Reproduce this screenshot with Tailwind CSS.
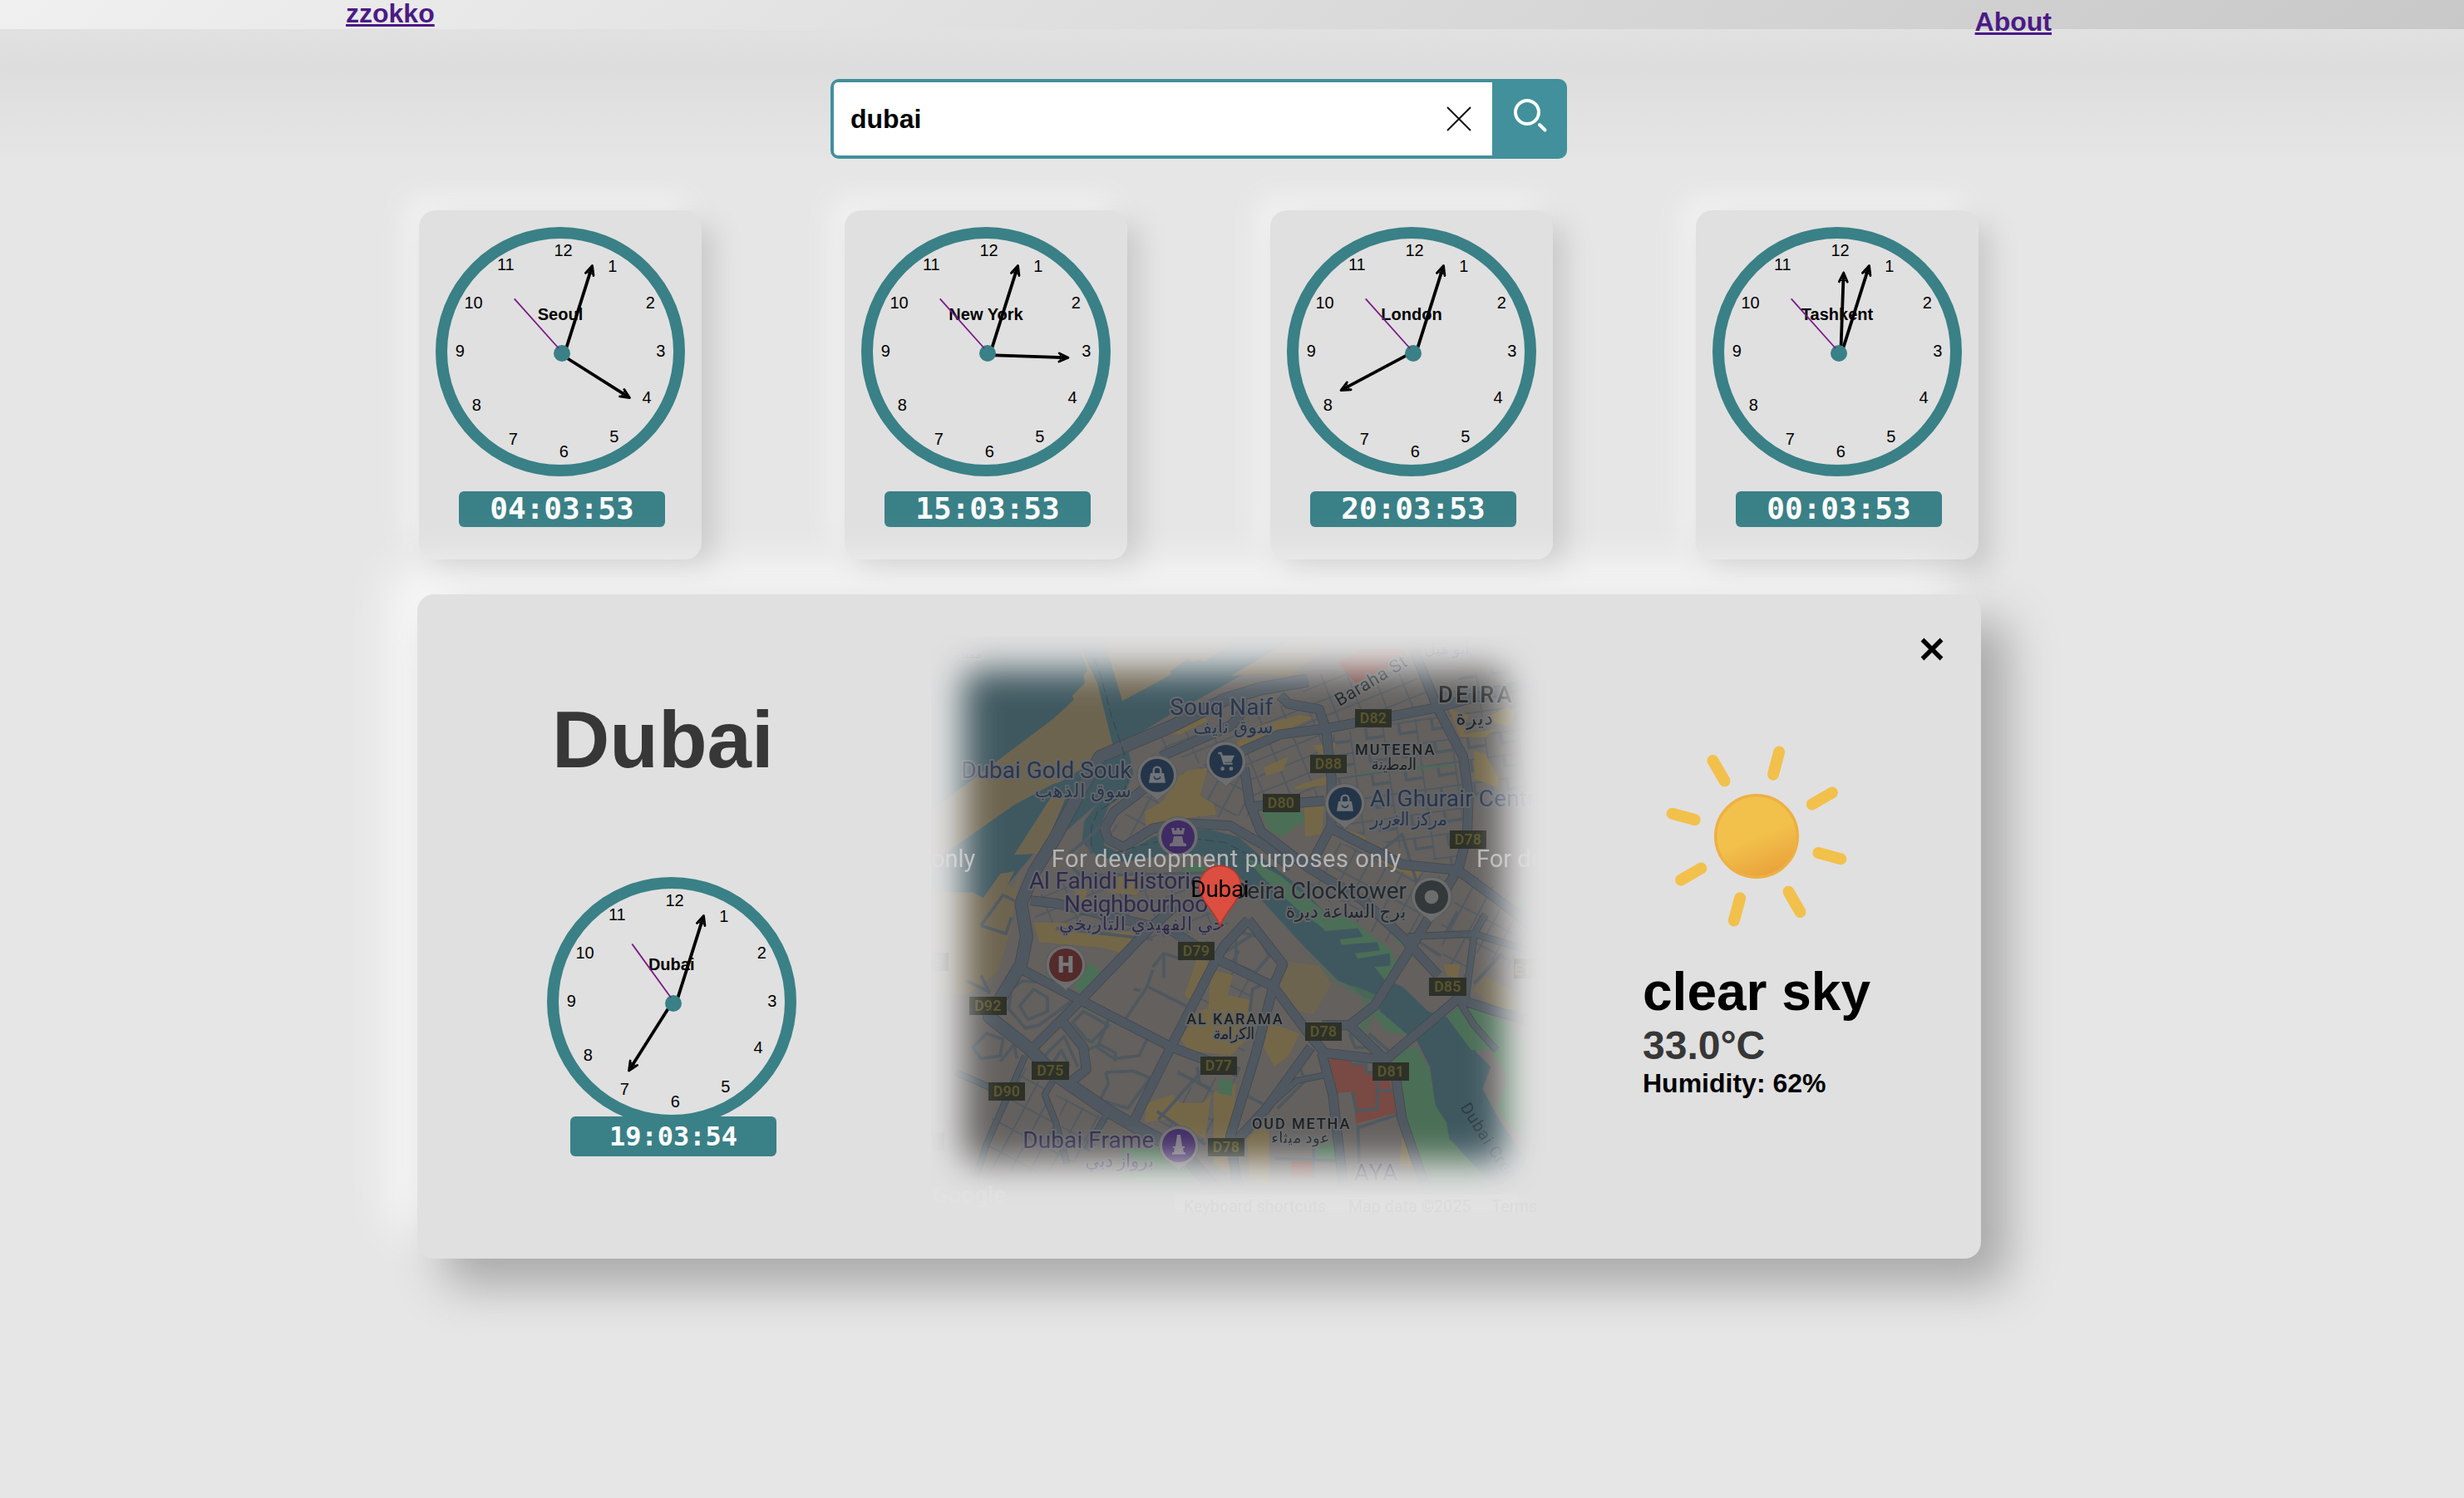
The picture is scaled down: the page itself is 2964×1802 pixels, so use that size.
<!DOCTYPE html>
<html lang="en">
<head>
<meta charset="utf-8">
<title>World clock</title>
<script src="https://cdn.jsdelivr.net/npm/@tailwindcss/browser@4"></script>
</head>
<body class="h-[1802px] w-[2964px] overflow-hidden bg-[#e6e6e6] font-['Liberation_Sans',Arial,sans-serif] text-black">

<!-- shared clock face and hand shapes -->
<svg class="hidden">
  <symbol id="face" viewBox="0 0 300 300">
    <circle cx="150" cy="150" r="143" fill="none" stroke="#3a8087" stroke-width="14"/>
    <g font-size="20" text-anchor="middle" fill="#000">
      <text x="153.6" y="35.3">12</text><text x="212.7" y="53.5">1</text><text x="258.3" y="97.5">2</text>
      <text x="270.7" y="155.7">3</text><text x="254" y="212">4</text><text x="214.7" y="258.5">5</text>
      <text x="154.3" y="276.5">6</text><text x="93.3" y="262.3">7</text><text x="49.3" y="220.7">8</text>
      <text x="29.3" y="155.7">9</text><text x="45.6" y="97.5">10</text><text x="84.3" y="51.7">11</text>
    </g>
  </symbol>
  <symbol id="minute" viewBox="0 0 300 300">
    <g transform="translate(188.5 46.5) rotate(17.5)" fill="none" stroke="#000" stroke-linejoin="round" stroke-linecap="round">
      <path d="M0 3V111" stroke-width="3.8"/><path d="M-5 11L0 0L5 11" stroke-width="2.8"/><path d="M-4 9.5H4" stroke-width="1.4"/>
    </g>
  </symbol>
  <symbol id="hour" viewBox="-10 -2 20 110">
    <g fill="none" stroke="#000" stroke-linejoin="round" stroke-linecap="round">
      <path d="M0 3V95" stroke-width="3.8"/><path d="M-5 11L0 0L5 11" stroke-width="2.8"/><path d="M-4 9.5H4" stroke-width="1.4"/>
    </g>
  </symbol>
</svg>

<div class="bg-linear-to-b from-[#e1e1e1] from-[35px] via-[#dddddd] via-[80px] to-[#e6e6e6] to-[205px]">
  <header class="flex h-[35px] items-start justify-between bg-linear-135 from-[#f0f0f0] to-[#c8c8c8] pr-[496px] pl-[416px] text-[32px] leading-[33px] font-bold text-[#4b1a85]">
    <a class="underline decoration-[3px] underline-offset-[2px]">zzokko</a>
    <a class="mt-[10px] underline decoration-[3px] underline-offset-[2px]">About</a>
  </header>

  <form class="mt-[60px] ml-[999px] flex h-24 w-[886px] overflow-hidden rounded-[10px] bg-[#41909b] p-1 pr-0">
    <div class="flex w-[792px] items-center justify-between rounded-l-[5px] bg-white pr-[25px] pl-5">
      <span class="text-[32px] leading-[36px] font-bold">dubai</span>
      <svg class="h-[30px] w-[30px]" viewBox="0 0 30 30"><path d="M1 1L29 29M29 1L1 29" stroke="#111" stroke-width="2"/></svg>
    </div>
    <svg class="mt-[18px] ml-[24px] h-[44px] w-[44px]" viewBox="0 0 44 44" fill="none" stroke="#fff" stroke-width="4"><circle cx="18" cy="18" r="14"/><path d="M33 33L39.5 39.5" stroke-linecap="round"/></svg>
  </form>
</div>

<main>
  <section class="mt-[62px] ml-[504px] flex gap-[172px]">
    <article class="h-[420px] w-[340px] rounded-[20px] bg-[#e0e0e0] px-5 pt-5 shadow-[16px_16px_32px_#cacaca,-16px_-16px_32px_#f2f2f2]">
      <svg class="block h-[300px] w-[300px]" viewBox="0 0 300 300">
        <use href="#face"/>
        <text x="150" y="111.7" font-size="20" font-weight="700" text-anchor="middle">Seoul</text>
        <use href="#minute"/>
        <g transform="translate(233.5 205.5) rotate(122.3)"><use href="#hour" x="-10" y="-2" width="20" height="110"/></g>
        <circle cx="152" cy="152" r="10" fill="#3a8087"/>
        <path d="M148 146L94.7 86.3" stroke="#7b1a85" stroke-width="1.8"/>
      </svg>
      <div class="mt-[18px] ml-7 h-[43px] w-[248px] rounded-md bg-[#3a8087] text-center font-['DejaVu_Sans_Mono',monospace] text-[36px] leading-[42px] font-bold text-white">04:03:53</div>
    </article>
    <article class="h-[420px] w-[340px] rounded-[20px] bg-[#e0e0e0] px-5 pt-5 shadow-[16px_16px_32px_#cacaca,-16px_-16px_32px_#f2f2f2]">
      <svg class="block h-[300px] w-[300px]" viewBox="0 0 300 300">
        <use href="#face"/>
        <text x="150" y="111.7" font-size="20" font-weight="700" text-anchor="middle">New York</text>
        <use href="#minute"/>
        <g transform="translate(249 157.3) rotate(91.9)"><use href="#hour" x="-10" y="-2" width="20" height="110"/></g>
        <circle cx="152" cy="152" r="10" fill="#3a8087"/>
        <path d="M148 146L94.7 86.3" stroke="#7b1a85" stroke-width="1.8"/>
      </svg>
      <div class="mt-[18px] ml-7 h-[43px] w-[248px] rounded-md bg-[#3a8087] text-center font-['DejaVu_Sans_Mono',monospace] text-[36px] leading-[42px] font-bold text-white">15:03:53</div>
    </article>
    <article class="h-[420px] w-[340px] rounded-[20px] bg-[#e0e0e0] px-5 pt-5 shadow-[16px_16px_32px_#cacaca,-16px_-16px_32px_#f2f2f2]">
      <svg class="block h-[300px] w-[300px]" viewBox="0 0 300 300">
        <use href="#face"/>
        <text x="150" y="111.7" font-size="20" font-weight="700" text-anchor="middle">London</text>
        <use href="#minute"/>
        <g transform="translate(65 196.5) rotate(242)"><use href="#hour" x="-10" y="-2" width="20" height="110"/></g>
        <circle cx="152" cy="152" r="10" fill="#3a8087"/>
        <path d="M148 146L94.7 86.3" stroke="#7b1a85" stroke-width="1.8"/>
      </svg>
      <div class="mt-[18px] ml-7 h-[43px] w-[248px] rounded-md bg-[#3a8087] text-center font-['DejaVu_Sans_Mono',monospace] text-[36px] leading-[42px] font-bold text-white">20:03:53</div>
    </article>
    <article class="h-[420px] w-[340px] rounded-[20px] bg-[#e0e0e0] px-5 pt-5 shadow-[16px_16px_32px_#cacaca,-16px_-16px_32px_#f2f2f2]">
      <svg class="block h-[300px] w-[300px]" viewBox="0 0 300 300">
        <use href="#face"/>
        <text x="150" y="111.7" font-size="20" font-weight="700" text-anchor="middle">Tashkent</text>
        <use href="#minute"/>
        <g transform="translate(157.7 55) rotate(2)"><use href="#hour" x="-10" y="-2" width="20" height="110"/></g>
        <circle cx="152" cy="152" r="10" fill="#3a8087"/>
        <path d="M148 146L94.7 86.3" stroke="#7b1a85" stroke-width="1.8"/>
      </svg>
      <div class="mt-[18px] ml-7 h-[43px] w-[248px] rounded-md bg-[#3a8087] text-center font-['DejaVu_Sans_Mono',monospace] text-[36px] leading-[42px] font-bold text-white">00:03:53</div>
    </article>
  </section>

  <section class="relative mt-[42px] ml-[502px] flex h-[799px] w-[1881px] rounded-[20px] bg-[#e0e0e0] shadow-[32px_32px_56px_#a8a8a8,-32px_-32px_56px_rgba(255,255,255,0.75)]">
    <div class="w-[618px] pt-[127px] pl-[156px]">
      <h1 class="ml-[6px] text-[96px] leading-[96px] font-bold text-[#373737]">Dubai</h1>
      <svg class="mt-[117px] block h-[300px] w-[300px]" viewBox="0 0 300 300">
        <use href="#face"/>
        <text x="149.7" y="111.7" font-size="20" font-weight="700" text-anchor="middle">Dubai</text>
        <use href="#minute"/>
        <g transform="translate(98.5 233) rotate(212.3)"><use href="#hour" x="-10" y="-2" width="20" height="110"/></g>
        <circle cx="152" cy="152" r="10" fill="#3a8087"/>
        <path d="M149 145L102.3 80.5" stroke="#7b1a85" stroke-width="1.8"/>
      </svg>
      <div class="relative -mt-3 ml-7 h-12 w-[248px] rounded-md bg-[#3a8087] text-center font-['DejaVu_Sans_Mono',monospace] text-[32px] leading-[48px] font-bold text-white">19:03:54</div>
    </div>

    <!-- city map, fading out to the panel at its edges -->
    <svg class="mt-[50px] block h-[700px] w-[750px] shrink-0" viewBox="0 45 2250 2100" font-family="Roboto, 'DejaVu Sans', sans-serif">
      <defs>
        <filter id="soft" x="-20%" y="-20%" width="140%" height="140%"><feGaussianBlur stdDeviation="62"/></filter>
        <mask id="fade" maskUnits="userSpaceOnUse" x="0" y="45" width="2250" height="2100">
          <rect x="118" y="168" width="1952" height="1775" rx="50" fill="#fff" filter="url(#soft)"/>
        </mask>
        <pattern id="gridA" width="62" height="92" patternUnits="userSpaceOnUse" patternTransform="rotate(28)"><path d="M0 0H62M0 0V92" stroke="#4f585f" stroke-width="11" fill="none"/></pattern>
        <pattern id="gridB" width="88" height="56" patternUnits="userSpaceOnUse" patternTransform="rotate(-22)"><path d="M0 0H88M0 0V56" stroke="#4f585f" stroke-width="10" fill="none"/></pattern>
        <pattern id="gridC" width="120" height="84" patternUnits="userSpaceOnUse" patternTransform="rotate(-8)"><path d="M0 0H120M0 0V84M60 0V42H120" stroke="#4f585f" stroke-width="10" fill="none"/></pattern>
        <g id="pin"><path d="M0 92C-14 70-72 52-72 0A72 72 0 1 1 72 0C72 52 14 70 0 92Z" fill="#6d6d6d" stroke="#55585b" stroke-width="3"/></g>
        <g id="bag"><path d="M-24-8H24L30 27H-30Z" fill="#6f7478"/><path d="M-13-8V-17A13 13 0 0 1 13-17V-8" fill="none" stroke="#6f7478" stroke-width="7"/><path d="M-11 5A11 9 0 0 0 11 5" fill="none" stroke="#243549" stroke-width="5"/></g>
      </defs>
      <g mask="url(#fade)">
        <rect x="0" y="45" width="2250" height="2100" fill="#63605e"/>
        <!-- sea and creek -->
        <path fill="#3f5860" d="M0 45H1370L1080 210L860 330L705 425L730 540L700 610L640 660L612 730L625 800L690 835L800 770L900 742L1010 745L1110 770L1200 850L1330 950L1420 1040L1500 1075L1555 1100L1660 1195L1655 1240L1600 1240L1640 1285L1700 1310L1795 1400L1860 1420L1915 1460L1970 1550L2020 1600L1990 1680L2050 1790L2180 1980L2250 2145H2100L1900 1890L1870 1860L1850 1790L1820 1740L1800 1600L1755 1510L1720 1485L1620 1400L1610 1360L1560 1350L1520 1310L1470 1290L1350 1170L1240 1050L1130 930L1000 840L880 830L700 860L600 840L545 790L552 715L600 650L440 790L370 830L270 950L190 990L150 970L0 970Z"/>
        <!-- sand -->
        <g fill="#6d6450">
          <path d="M520 45L565 170L550 185L555 215L510 260L515 275L440 345L0 675V865L300 655L440 580L470 570L600 490L655 435L600 215L545 100Z"/>
          <path d="M620 45L690 280L865 185V170L930 125L940 138L970 130L985 138L1080 75L1100 45Z"/>
          <path d="M1080 190L1300 60L1420 45L1400 110L1290 190L1180 180Z"/>
          <path d="M450 600L490 620L400 830L300 835Z"/>
          <path d="M0 970L150 972L187 992L250 903L300 895L275 945L298 955L330 890L300 1010L290 1100L240 1260L130 1340L0 1330Z"/>
          <path d="M1285 1220L1400 1235L1445 1300L1380 1410L1270 1390L1250 1330Z"/>
          <path d="M1955 1320L2000 1270L2100 1330L2130 1390L2040 1395Z"/>
        </g>
        <!-- street grids -->
        <path fill="url(#gridB)" d="M760 420L1080 330L1400 270L1410 420L1440 620L1140 700L1120 560L900 480Z"/>
        <path fill="url(#gridA)" d="M700 690L850 560L1080 480L1130 560L1145 690L1020 700L800 710L700 780L650 750Z"/>
        <path fill="url(#gridB)" d="M1300 210L1700 100L1820 310L1440 380L1400 300Z"/>
        <path fill="url(#gridC)" d="M1450 400L1830 330L1930 560V720L1890 880L1440 720Z"/>
        <path fill="url(#gridC)" d="M1830 220L2250 90V620L1960 640L1900 420Z"/>
        <path fill="url(#gridA)" d="M1440 780L1890 930L1780 1100L1640 1150L1360 950Z"/>
        <path fill="url(#gridA)" d="M1840 1090L1950 900L2250 1080V1300L2100 1250L1950 1180L1930 1350L1850 1260Z"/>
        <path fill="url(#gridA)" d="M240 1700L330 1590L410 1680L450 1780L480 1980L170 1980Z"/>
        <path fill="url(#gridA)" d="M450 1700L640 1790L600 1880L500 1960Z"/>
        <path fill="url(#gridA)" d="M1010 1230L1160 1260L1130 1560L1060 1590L930 1500Z"/>
        <path fill="url(#gridA)" d="M780 1760L1000 1640L1100 1640L1060 1880L880 1850Z"/>
        <path fill="url(#gridB)" d="M370 990L560 900L980 960L1080 1090L760 1150L620 1170L380 1140Z"/>
        <!-- commercial blocks -->
        <g fill="#756847" fill-opacity=".92">
          <path d="M770 680L840 640L880 560L930 530L1000 520L970 620L1020 650L1030 690L940 700L900 710L820 730L780 760Z"/>
          <path d="M860 370L980 330L1000 350L900 400L860 400Z"/><path d="M1100 430L1180 370L1330 330L1380 340L1180 430L1120 470Z"/>
          <path d="M1380 440L1460 430L1450 480L1400 470Z"/><path d="M1200 520L1290 480L1270 530L1210 550Z"/><path d="M1310 590L1430 550L1440 580L1320 600Z"/>
          <path d="M1345 650L1420 645L1410 760L1350 770Z"/><path d="M1870 310L1940 330L1920 400L2040 380L2000 410L1910 410Z"/>
          <path d="M2020 330L2080 300L2110 320L2090 370L2030 360Z"/><path d="M1960 460L2000 470L2050 560L2040 590L1960 560Z"/>
          <path d="M1460 740L1500 745L1570 770L1560 800L1460 760Z"/><path d="M1570 790L1680 840L1780 890L1750 920L1640 870Z"/>
          <path d="M370 1080L480 1080L560 1120L740 1110L690 1190L620 1170L390 1150Z"/><path d="M640 930L700 900L780 930L740 980L640 970Z"/>
          <path d="M520 960L560 950L560 1010L520 1010Z"/><path d="M960 1210L1010 1225L930 1360L915 1340Z"/>
          <path d="M1010 1250L1090 1270L1070 1340L1150 1360L1140 1500L1080 1560L930 1540L900 1500L960 1400L1000 1390Z"/>
          <path d="M1220 1440L1330 1480L1290 1560L1240 1600L1200 1530Z"/>
          <path d="M780 1730L870 1700L900 1730L980 1730L1010 1700L990 1860L850 1790L770 1800Z"/><path d="M1020 1690L1100 1660L1080 1990L1020 1950Z"/>
          <path d="M1140 1860L1220 1780L1220 2030L1150 2000Z"/><path d="M1850 1230L1910 1230L1900 1280L1860 1270Z"/>
          <path d="M1700 1860L1720 1840L1740 1960L1690 1960Z"/>
        </g>
        <!-- parks -->
        <g fill="#4b6e56">
          <path d="M1190 680L1340 680L1350 710L1320 730L1265 770L1220 745Z"/><path d="M900 890L960 865L1010 890L1000 920L910 910Z"/>
          <path d="M1130 840L1260 910L1420 1040L1520 1070L1660 1180L1680 1240L1640 1290L1600 1240L1660 1235L1655 1190L1540 1210L1530 1190L1620 1180L1610 1150L1480 1160L1475 1140L1560 1130L1540 1100L1420 1110L1415 1100L1320 1030L1200 920Z"/>
          <path d="M1340 1170L1480 1305L1535 1310L1630 1350L1560 1500L1500 1490L1560 1380L1550 1345L1460 1300Z" opacity=".7"/>
          <path d="M1580 1380L1620 1400L1720 1485L1640 1470Z"/>
          <path d="M1660 1550L1750 1525L1800 1610L1820 1740L1860 1800L1870 1860L2050 2050L1780 2060L1680 1650Z"/>
          <path d="M1860 1420L1920 1370L2080 1440L2160 1530L2190 1900L2060 1780L2040 1750L2080 1640L2020 1540L1950 1540Z"/>
          <path d="M1665 1135L1720 1150L1720 1180Z"/><path d="M575 1220L615 1260L540 1335L515 1310Z"/><path d="M410 1260L440 1290L420 1290Z"/>
          <path d="M1040 1640L1090 1650L1085 1705L1035 1695Z"/><path d="M690 1890L850 1890L950 1960V2080L690 2010Z"/><path d="M1390 1890L1460 1870L1460 1950L1390 1940Z"/>
          <path d="M1500 545L1650 520L1890 510V518L1640 535Z" opacity=".7"/><path d="M2110 980L2150 1000V1030L2100 1010Z"/>
        </g>
        <g fill="#784a43">
          <path d="M1435 1570L1515 1568L1520 1590L1570 1595V1620L1650 1630L1685 1765L1535 1805L1520 1690L1460 1695Z"/>
          <path d="M1470 140L1560 90L1700 90L1720 120L1610 180L1530 215Z"/><path d="M1300 1940H1380V2000H1300Z"/>
        </g>
        <!-- local streets -->
        <g fill="none" stroke="#4f585f" stroke-width="11" stroke-linejoin="round">
          <path d="M800 1240L840 1190L900 1210L1000 1150M800 1250L780 1310L920 1380M780 1310L700 1430M840 1190V1280M730 1320L755 1325"/>
          <path d="M330 1290L450 1300L510 1360L390 1450L340 1460L280 1390L290 1320ZM370 1320L420 1350V1400L350 1430L320 1380Z"/>
          <path d="M640 1430L600 1530L660 1570L750 1560L780 1500M560 1540L610 1520L665 1550V1580M630 1620L640 1660L610 1720L710 1750L790 1640L730 1615L630 1620"/>
          <path d="M510 1440L550 1400L640 1450L580 1510L560 1500ZM410 1560L480 1490L530 1600M430 1600L470 1540L500 1600"/>
          <path d="M150 1530L200 1480L260 1500L250 1560L180 1570ZM250 1580L300 1520L310 1570M180 1270L210 1330L130 1290"/>
          <path d="M180 1090L260 980L300 1000M180 1090L270 1120L290 1060M450 1100L800 1140M560 1000L640 1100"/>
          <path d="M890 1620L1010 1680M960 1600L970 1660M1100 1110L1180 1130L1220 1200L1170 1260L1100 1230ZM1240 1280L1160 1320L1150 1400"/>
          <path d="M1040 1200L1180 1110M1110 1180L1090 1220M1510 1480L1530 1530L1620 1530M1580 1480L1660 1550M1330 1600L1350 1650L1250 1750M1130 1700L1210 1740"/>
          <path d="M1520 1690L1535 1760L1610 1750V1620M1515 1590H1570V1620H1620M1620 1685H1680M1540 1810L1545 1950M1240 1930L1480 1940M1380 1890V2000"/>
          <path d="M820 1790L990 1600M815 1760L990 1880M1540 1820L1690 1770"/>
          <path d="M1480 740L1560 650M1580 860L1700 760L1760 960M1900 1040L1850 1130M1730 1130L1840 1200M1960 1300L2060 1190"/>
          <path d="M500 870L540 910L1000 900M500 830L560 780L650 690M560 780L580 830"/>
        </g>
        <!-- arterial roads: dark casing under a lighter core -->
        <g fill="none" stroke-linejoin="round">
          <g stroke="#45484c" stroke-width="36">
            <path stroke-width="48" d="M1360 205L1190 235L1060 275L870 370L740 425L610 480L540 600L450 770L370 900L325 1010L345 1130L325 1230L210 1420L350 1530L450 1630L640 1760L780 1840L900 1900L1060 2080"/>
            <path d="M830 480L1080 370L1150 290M1260 260L1290 290L1400 310L1425 380L1445 560V730L1360 890M1080 480L1260 400L1420 380L1820 305L2250 190"/>
            <path d="M1740 90L1830 310L1920 480L1940 620L1935 760L1905 880L1780 1090L1720 1190L1600 1380L1510 1450L1410 1450"/>
            <path d="M1130 520L1150 650L1190 750L1360 880L1560 1000L1700 1130L1830 1270M1160 660L1420 640M1445 740L1700 870L1900 890L2050 1000L2200 1120"/>
            <path d="M690 810L800 740L900 720L1080 730L1200 800L1300 880M625 740L660 680L740 620L800 570M625 740L640 780L700 810"/>
            <path d="M1145 1070L1270 1230L1235 1310L1370 1490L1420 1550L1640 1575L1900 1355L2040 1400L2250 1460M1145 1070L1060 1160L1030 1210L870 1520L800 1660L730 1800"/>
            <path d="M1235 1310L1030 1210L870 1110L450 1010L360 1000M330 1250L540 1360L870 1530L1110 1620M540 1360L780 1110L880 1020M540 1360L370 1530M470 1430L550 1530L560 1610L510 1650"/>
            <path d="M1640 1575L1510 1450M1410 1550L1450 1700L1490 2050M1370 1530L1210 1750L1080 1890M1670 1590L1700 1790L1800 2080M1235 1310L1170 1560L1080 1850L1100 2000L1140 2100"/>
            <path d="M1720 1130L1960 1120L2250 1210M1960 1120L1930 1350M2000 1050L1960 1120M1910 1370L1960 1450L2040 1540" stroke-width="26"/>
            <path d="M440 1650L410 1700L450 1800L490 1950M340 1560L200 1880L160 2000M90 1620L270 1700M1210 1750L1320 1650L1420 1630M640 1760L560 1900" stroke-width="24"/>
          </g>
          <g stroke="#4f5860" stroke-width="31">
            <path stroke-width="43" d="M1360 205L1190 235L1060 275L870 370L740 425L610 480L540 600L450 770L370 900L325 1010L345 1130L325 1230L210 1420L350 1530L450 1630L640 1760L780 1840L900 1900L1060 2080"/>
            <path d="M830 480L1080 370L1150 290M1260 260L1290 290L1400 310L1425 380L1445 560V730L1360 890M1080 480L1260 400L1420 380L1820 305L2250 190"/>
            <path d="M1740 90L1830 310L1920 480L1940 620L1935 760L1905 880L1780 1090L1720 1190L1600 1380L1510 1450L1410 1450"/>
            <path d="M1130 520L1150 650L1190 750L1360 880L1560 1000L1700 1130L1830 1270M1160 660L1420 640M1445 740L1700 870L1900 890L2050 1000L2200 1120"/>
            <path d="M690 810L800 740L900 720L1080 730L1200 800L1300 880M625 740L660 680L740 620L800 570M625 740L640 780L700 810"/>
            <path d="M1145 1070L1270 1230L1235 1310L1370 1490L1420 1550L1640 1575L1900 1355L2040 1400L2250 1460M1145 1070L1060 1160L1030 1210L870 1520L800 1660L730 1800"/>
            <path d="M1235 1310L1030 1210L870 1110L450 1010L360 1000M330 1250L540 1360L870 1530L1110 1620M540 1360L780 1110L880 1020M540 1360L370 1530M470 1430L550 1530L560 1610L510 1650"/>
            <path d="M1640 1575L1510 1450M1410 1550L1450 1700L1490 2050M1370 1530L1210 1750L1080 1890M1670 1590L1700 1790L1800 2080M1235 1310L1170 1560L1080 1850L1100 2000L1140 2100"/>
            <path d="M1720 1130L1960 1120L2250 1210M1960 1120L1930 1350M2000 1050L1960 1120M1910 1370L1960 1450L2040 1540" stroke-width="21"/>
            <path d="M440 1650L410 1700L450 1800L490 1950M340 1560L200 1880L160 2000M90 1620L270 1700M1210 1750L1320 1650L1420 1630M640 1760L560 1900" stroke-width="19"/>
          </g>
          <path d="M570 80L610 180L650 330L700 480M720 540L690 620L600 680L578 740V810M660 830L760 800L900 770L1060 790L1250 890" stroke="#364a50" stroke-width="4" stroke-dasharray="34 14"/>
        </g>

        <!-- road number shields -->
        <g font-size="54" font-weight="700" text-anchor="middle" fill="#57532d">
          <g fill="#2d3128"><path d="M1530 309h132v66h-132zM1368 474h132v66h-132zM1197 615h135v66h-135zM1872 747h132v66h-132zM891 1149h132v66h-132zM138 1347h135v66h-135zM363 1581h135v66h-135zM207 1656h132v66h-132zM972 1563h132v66h-132zM999 1857h132v66h-132zM1797 1278h135v66h-135zM1350 1440h132v66h-132zM1593 1584h132v66h-132zM-70 1188h133v66h-133zM-85 1837h133v66h-133zM2103 1210h120v72h-120z"/></g>
          <text x="1596" y="361">D82</text><text x="1434" y="526">D88</text><text x="1263" y="667">D80</text><text x="1938" y="799">D78</text>
          <text x="957" y="1201">D79</text><text x="205" y="1399">D92</text><text x="430" y="1633">D75</text><text x="273" y="1708">D90</text>
          <text x="1038" y="1615">D77</text><text x="1065" y="1909">D78</text><text x="1864" y="1330">D85</text><text x="1416" y="1492">D78</text><text x="1659" y="1636">D81</text>
          <text x="28" y="1240">5</text><text x="2150" y="1268">E11</text>
        </g>

        <!-- place pins -->
        <use href="#pin" x="816" y="548"/><circle cx="816" cy="548" r="60" fill="#243549"/><use href="#bag" x="816" y="548"/>
        <use href="#pin" x="1064" y="498"/><circle cx="1064" cy="498" r="60" fill="#243549"/>
        <g transform="translate(1064 498)"><path d="M-28-30H-18L-6 8H24" fill="none" stroke="#6f7478" stroke-width="7"/><path d="M-17-22H31L20 2H-9Z" fill="#6f7478"/><circle cx="-12" cy="26" r="7" fill="#6f7478"/><circle cx="19" cy="26" r="7" fill="#6f7478"/></g>
        <use href="#pin" x="1494" y="650"/><circle cx="1494" cy="650" r="60" fill="#243549"/><use href="#bag" x="1494" y="650"/>
        <use href="#pin" x="891" y="770"/><circle cx="891" cy="770" r="60" fill="#3f2a63"/>
        <path d="M867 738h11v9h8v-9h11v9h8v-9h11l-5 23h-39zM876 768h30l5 23 10 4v9h-60v-9l10-4z" fill="#706d78"/>
        <use href="#pin" x="1806" y="987"/><circle cx="1806" cy="987" r="60" fill="#33383b"/><circle cx="1806" cy="987" r="25" fill="#6d6d6d"/>
        <use href="#pin" x="486" y="1233"/><circle cx="486" cy="1233" r="60" fill="#542a2b"/><path d="M461 1200h15v24h20v-24h15v60h-15v-24h-20v24h-15z" fill="#777"/>
        <use href="#pin" x="894" y="1884"/><circle cx="894" cy="1884" r="60" fill="#3f2a63"/><path d="M888 1845h12l6 42h9v6h-6l3 16h6v7h-48v-7h6l3-16h-6v-6h9z" fill="#77727f"/>

        <!-- place names -->
        <g font-size="84" stroke="#626669" stroke-width="12" paint-order="stroke" stroke-linejoin="round">
          <g fill="#29344d">
            <text x="109" y="558" textLength="615">Dubai Gold Souk</text>
            <text x="374" y="626" font-size="66" textLength="348">سوق الذهب</text>
            <text x="862" y="330" textLength="372">Souq Naif</text>
            <text x="946" y="396" font-size="66" textLength="288">سوق نايف</text>
            <text x="1584" y="660" textLength="640">Al Ghurair Centre</text>
            <text x="1584" y="728" font-size="66" textLength="280">مركز الغرير</text>
          </g>
          <g fill="#33284a">
            <text x="354" y="956" textLength="626">Al Fahidi Historic</text>
            <text x="480" y="1040" textLength="566">Neighbourhood</text>
            <text x="462" y="1108" font-size="66" textLength="598">حي الفهيدي التاريخي</text>
            <text x="331" y="1893" textLength="474">Dubai Frame</text>
            <text x="556" y="1962" font-size="66" textLength="248">برواز دبي</text>
            <text x="1526" y="2010" textLength="158">AYA</text>
          </g>
          <g fill="#25282b">
            <text x="1086" y="994" textLength="630">Deira Clocktower</text>
            <text x="1280" y="1062" font-size="66" textLength="434">برج الساعة ديرة</text>
          </g>
          <g fill="#1f1f1f" font-weight="500">
            <text x="1830" y="284" font-size="82" textLength="266">DEIRA</text><text x="1894" y="366" font-size="70" textLength="134">ديرة</text>
            <text x="1530" y="474" font-size="54" textLength="286">MUTEENA</text><text x="1588" y="528" font-size="58" textLength="164">المطينة</text>
            <text x="922" y="1446" font-size="54" textLength="346">AL KARAMA</text><text x="1018" y="1500" font-size="58" textLength="150">الكرامة</text>
            <text x="1158" y="1824" font-size="54" textLength="352">OUD METHA</text><text x="1228" y="1874" font-size="54" textLength="210">عود ميثاء</text>
          </g>
          <text transform="translate(1474 300) rotate(-31)" font-size="64" fill="#1f1f1f" textLength="290">Baraha St</text>
          <text transform="translate(1908 1746) rotate(57)" font-size="60" fill="#2b3a42" stroke="none" textLength="350">Dubai Creek</text>
          <text x="80" y="126" font-size="56" fill="#29344d">ميناء</text><text x="1780" y="112" font-size="56" fill="#29344d">أبو هيل</text>
        </g>
        <g font-size="87" fill="#b4b4b4">
          <text x="434" y="880" textLength="1262">For development purposes only</text>
          <text x="160" y="880" text-anchor="end">only</text><text x="1968" y="880">For de</text>
        </g>
        <path d="M1043 1094C1035 1050 968 1000 968 949A75 75 0 0 1 1118 949C1118 1000 1051 1050 1043 1094Z" fill="#db4e40" stroke="#b03a30" stroke-width="5"/>
        <text x="937" y="986" font-size="84" textLength="211">Dubai</text>
      </g>
      <!-- attribution strip -->
      <rect x="880" y="2060" width="1240" height="62" fill="#e4e4e4" fill-opacity=".35"/>
      <text x="4" y="2092" font-size="84" fill="#e4e4e4" fill-opacity=".6" font-weight="500">Google</text>
      <g font-size="58" fill="#dbdbdb"><text x="912" y="2124" textLength="514">Keyboard shortcuts</text><text x="1506" y="2124" textLength="442">Map data ©2025</text><text x="2024" y="2124">Terms</text></g>
    </svg>

    <div class="flex flex-1 flex-col pl-[106px]">
      <svg class="mt-[52px] mr-[45px] h-[28px] w-[28px] self-end" viewBox="0 0 28 28"><path d="M2.5 2.5L25.5 25.5M25.5 2.5L2.5 25.5" stroke="#000" stroke-width="5.4"/></svg>
      <svg class="mt-[99px] ml-[25px] h-[224px] w-[224px]" viewBox="-112 -112 224 224">
        <defs>
          <linearGradient id="sun" x1=".3" y1="0" x2=".7" y2="1"><stop offset="0" stop-color="#f2c14b"/><stop offset=".5" stop-color="#f2c14b"/><stop offset="1" stop-color="#e9a03a"/></linearGradient>
          <path id="ray" d="M0-77V-105"/>
        </defs>
        <circle r="49.3" fill="url(#sun)" stroke="#eeb043" stroke-width="3.5"/>
        <g stroke="#f2c14b" stroke-width="14" stroke-linecap="round">
          <use href="#ray" transform="rotate(15)"/><use href="#ray" transform="rotate(60)"/><use href="#ray" transform="rotate(105)"/><use href="#ray" transform="rotate(150)"/>
          <use href="#ray" transform="rotate(195)"/><use href="#ray" transform="rotate(240)"/><use href="#ray" transform="rotate(285)"/><use href="#ray" transform="rotate(330)"/>
        </g>
      </svg>
      <h2 class="mt-[39px] text-[64px] leading-[73px] font-bold">clear sky</h2>
      <p class="text-[48px] leading-[55px] font-bold text-[#373737]">33.0°C</p>
      <p class="text-[32px] leading-[37px] font-bold">Humidity: 62%</p>
    </div>
  </section>
</main>
</body>
</html>
